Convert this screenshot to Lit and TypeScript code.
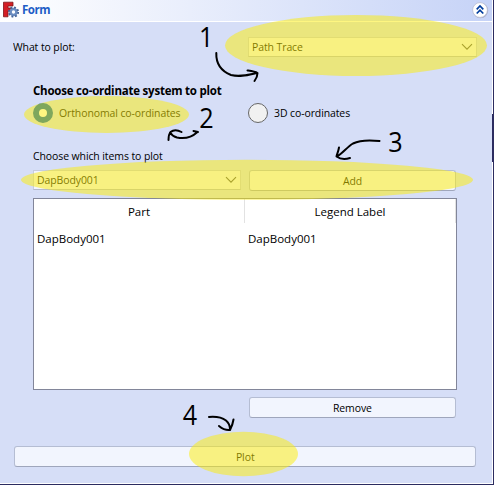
import { LitElement, html, css, svg } from "lit";
import { customElement, property } from "lit/decorators.js";

@customElement("combo-box")
class ComboBox extends LitElement {
  @property() value = "";
  static styles = css`
    :host {
      display: flex; align-items: center; justify-content: space-between;
      box-sizing: border-box; height: 20px; padding: 0 3px 0 3px;
      background: #f2f5fe; border: 1px solid #c6cce0; border-bottom-color: #b4bacd;
    }
    span { white-space: nowrap; transform: scaleX(0.91); transform-origin: left; }
    svg { display: block; }
  `;
  render() {
    return html`<span>${this.value}</span>
      <svg width="12" height="8" viewBox="0 0 12 8" fill="none" stroke="#555" stroke-width="1.1"><path d="M1 1.200 6 6.200 11 1.200" /></svg>`;
  }
}

@customElement("push-button")
class PushButton extends LitElement {
  static styles = css`
    :host {
      display: flex; align-items: center; justify-content: center;
      box-sizing: border-box; height: 21px; background: #f2f5fe;
      border: 1px solid #b5bdd3; border-bottom-color: #9fa6bc; border-radius: 3px;
    }
    span { transform: scaleX(0.91); }
  `;
  render() { return html`<span><slot></slot></span>`; }
}

@customElement("app-root")
class AppRoot extends LitElement {
  static styles = css`
    :host {
      display: block; position: relative; width: 494px; height: 485px; overflow: hidden;
      box-sizing: border-box; background: #d6def7; color: #000;
      border-right: 1px solid #2c2c60; border-bottom: 1px solid #2c2c60;
      font: 11.5px/16px "Open Sans", "Noto Sans", sans-serif;
    }
    .panel { height: 484px; box-sizing: border-box; border-right: 1px solid #fff; border-bottom: 1px solid #fff; }
    .head {
      display: flex; align-items: center; height: 22px; box-sizing: border-box; padding: 0 3px 3px 3px;
      border-bottom: 1px solid #fff; background: linear-gradient(90deg, #fff, #c6d3f7);
    }
    .logo { display: block; margin-right: 3px; }
    .title { flex: 1; font-weight: 700; color: #215dc6; font-size: 11.5px; letter-spacing: -0.5px; padding-top: 1px; }
    .toggle { display: block; margin-bottom: -2px; }
    .body { display: flex; flex-direction: column; padding: 15px 16px 0 14px; }
    .row { display: flex; align-items: center; }
    .what { height: 20px; }
    .what .label { flex: none; width: 235px; margin-left: -1px; }
    .what combo-box { flex: 1; margin-right: -1px; }
    .group { padding: 0 19px; }
    .label, .radio, combo-box, push-button { letter-spacing: -0.1px; white-space: nowrap; }
    .narrow { display: inline-block; transform: scaleX(0.91); transform-origin: left; }
    .heading { margin-top: 26px; height: 16px; font-weight: 700; letter-spacing: -0.22px; white-space: nowrap; }
    .radios { height: 22px; margin-top: 3px; }
    .radio { flex: none; display: flex; align-items: center; width: 215px; gap: 6px; }
    .dot { width: 20px; height: 20px; box-sizing: border-box; border-radius: 50%; border: 1px solid #666; background: #f1f1f1; }
    .dot.on { border: 6px solid #0060b6; background: #fff; }
    .items { margin-top: 24px; height: 16px; }
    .pick { display: grid; grid-template-columns: 208px 207px; gap: 8px; margin-top: 6px; height: 21px; }
    .table {
      margin-top: 7px; width: 424px; height: 192px; box-sizing: border-box;
      background: #fff; border: 1px solid #82869a;
    }
    .cells { display: grid; grid-template-columns: 211px 211px; height: 24px; }
    .th { border-right: 1px solid #e2e2e2; height: 24px; line-height: 26px; text-align: center; }
    .td { padding: 8px 0 0 3px; }
    .remove { width: 207px; margin: 7px 0 0 216px; }
    .plot { margin-top: 28px; }
    .marks { position: absolute; left: 0; top: 0; pointer-events: none; }
    .edge { position: absolute; left: 492px; top: 114px; width: 1px; height: 48px; background: #2c2c60; }
    .marks text { font: 28px "Open Sans", sans-serif; }
  `;

  private marks = [
    { cx: 356, cy: 45.5, rx: 131, ry: 30.5 },
    { cx: 106.5, cy: 114.5, rx: 82.5, ry: 18.5 },
    { cx: 247, cy: 179.8, rx: 226, ry: 20 },
    { cx: 243.5, cy: 454, rx: 54.5, ry: 22.2 },
  ];
  private digits = [
    { x: 199, y: 47, n: "1" }, { x: 199.2, y: 128, n: "2" },
    { x: 388.2, y: 152, n: "3" }, { x: 182.8, y: 425, n: "4" },
  ];

  render() {
    return html`
      <div class="panel">
        <div class="head">
          <svg class="logo" width="16" height="17" viewBox="0 0 16 17">
            <path d="M.5 1.200H10V5H5V7H8.500V10H5V15.800H.5Z" fill="#d41e24" stroke="#7c1518" stroke-width=".8" />
            <circle cx="10.500" cy="11" r="3" fill="none" stroke="#6a8cc0" stroke-width="2.600" />
            <circle cx="10.500" cy="11" r="4.700" fill="none" stroke="#45659a" stroke-width="1.800" stroke-dasharray="1.900 1.790" />
          </svg>
          <span class="title">Form</span>
          <svg class="toggle" width="18" height="18" viewBox="0 0 18 18">
            <circle cx="9.500" cy="9.500" r="7.700" fill="#a8adc8" />
            <circle cx="9" cy="9" r="7.400" fill="#fff" stroke="#b8bdd3" stroke-width=".8" />
            <path d="M5.700 8.300 9 5 12.300 8.300M5.700 12.500 9 9.200 12.300 12.500" fill="none" stroke="#003c9c" stroke-width="1.700" />
          </svg>
        </div>
        <div class="body">
          <div class="row what"><div class="label"><span class="narrow">What to plot:</span></div><combo-box .value=${"Path Trace"}></combo-box></div>
          <div class="group">
            <div class="heading">Choose co-ordinate system to plot</div>
            <div class="row radios">
              <div class="radio"><span class="dot on"></span><span class="narrow">Orthonomal co-ordinates</span></div>
              <div class="radio"><span class="dot"></span><span class="narrow">3D co-ordinates</span></div>
            </div>
            <div class="label items"><span class="narrow">Choose which items to plot</span></div>
            <div class="pick"><combo-box .value=${"DapBody001"}></combo-box><push-button>Add</push-button></div>
            <div class="table">
              <div class="cells"><div class="th">Part</div><div class="th">Legend Label</div></div>
              <div class="cells"><div class="td">DapBody001</div><div class="td">DapBody001</div></div>
            </div>
            <push-button class="remove">Remove</push-button>
          </div>
          <push-button class="plot">Plot</push-button>
        </div>
      </div>
      <div class="edge"></div>
      <svg class="marks" width="494" height="485" viewBox="0 0 494 485">
        ${this.marks.map(m => svg`<ellipse cx=${m.cx} cy=${m.cy} rx=${m.rx} ry=${m.ry} fill="#fdee04" fill-opacity=".5" />`)}
        ${this.digits.map(d => svg`<text transform="translate(${d.x} ${d.y}) scale(.9 1)">${d.n}</text>`)}
        <g fill="none" stroke="#000" stroke-width="2" stroke-linecap="round" stroke-linejoin="round">
          <path d="M216.300 53C216 63 221 71 231 75C240 77.500 248 75 257 73M247.500 70.500C251 71 255 71.500 257.500 73C257.500 76 256 79 254.500 81" />
          <path d="M197.500 132C192 137 184 139 177 137.500C173 136.500 171 134 170 132.500M193.500 131L198 132M181.500 132C177 129.500 173 130 170.500 132C169 134 168.500 137 168.500 140" />
          <path d="M379.500 141C369 139.800 360 140 353 143.500C347 147 343 153 337 156.500M339 147.500C338.500 151 337 154 336.500 156.500C340 159 345 159.500 350 158" />
          <path d="M209 417C215 416.500 222 417.500 226 420.500C229 423 230 426 230 429.500M219 426C222 428.500 226 430.500 230 430C231.500 427 233 423 233.500 419.500" />
        </g>
      </svg>
    `;
  }
}
